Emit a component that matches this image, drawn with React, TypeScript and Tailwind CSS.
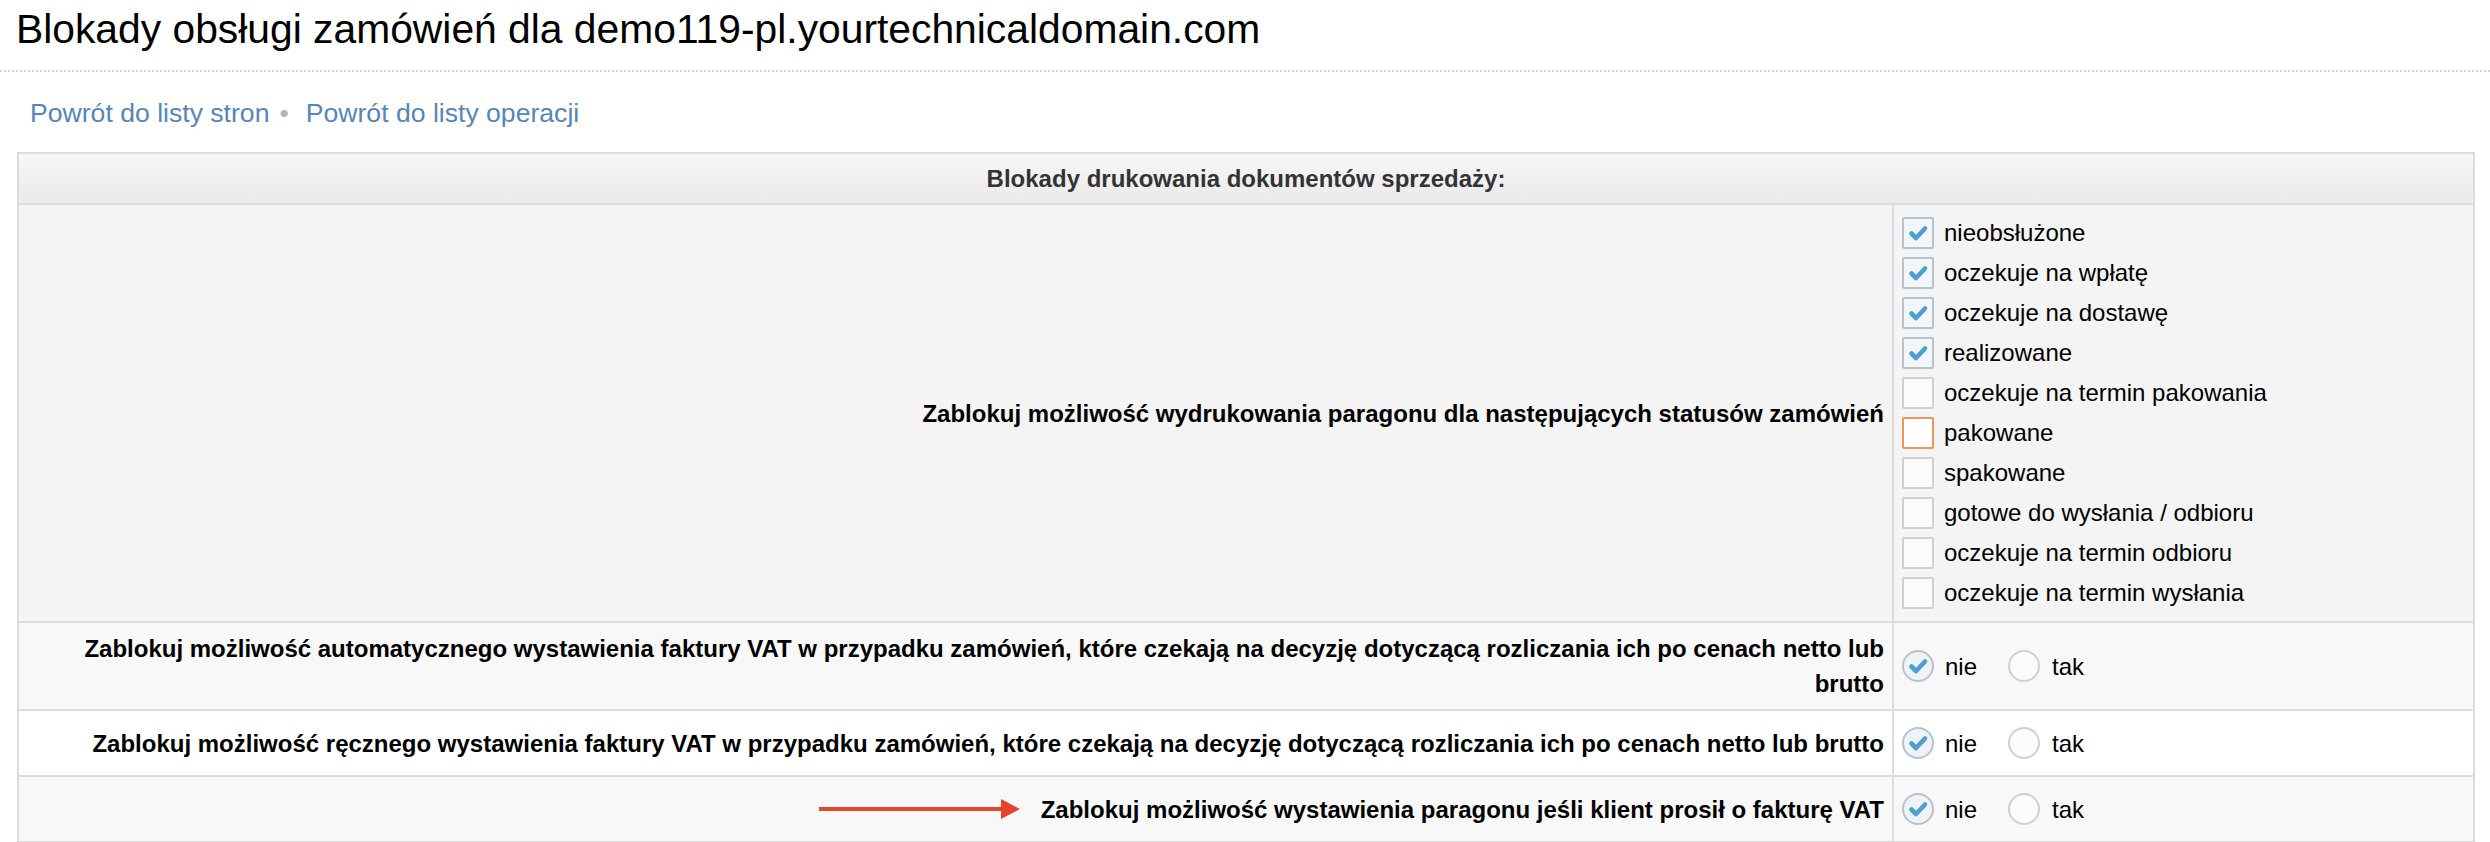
const FONT = "font-['Liberation_Sans',Arial,Helvetica,sans-serif]";

type Status = {
  label: string;
  checked?: boolean;
  focused?: boolean;
};

const STATUSES: Status[] = [
  { label: "nieobsłużone", checked: true },
  { label: "oczekuje na wpłatę", checked: true },
  { label: "oczekuje na dostawę", checked: true },
  { label: "realizowane", checked: true },
  { label: "oczekuje na termin pakowania" },
  { label: "pakowane", focused: true },
  { label: "spakowane" },
  { label: "gotowe do wysłania / odbioru" },
  { label: "oczekuje na termin odbioru" },
  { label: "oczekuje na termin wysłania" },
];

function CheckMark() {
  return (
    <svg viewBox="0 0 28 28" className="h-[28px] w-[28px]">
      <path
        d="M7.5 14.5 L12 19 L21 9.5"
        fill="none"
        stroke="#4d9fd1"
        strokeWidth="4.6"
        strokeLinecap="round"
        strokeLinejoin="round"
      />
    </svg>
  );
}

function Checkbox({ checked, focused }: { checked?: boolean; focused?: boolean }) {
  const tone = checked
    ? "border-[#b7c2ce] bg-[#f3f6f9]"
    : focused
      ? "border-[#f0955a] bg-white"
      : "border-[#d0d0d0] bg-[#fbfbfb]";
  return (
    <span className={`flex h-[32px] w-[32px] shrink-0 items-center justify-center rounded-[2px] border-2 ${tone}`}>
      {checked && <CheckMark />}
    </span>
  );
}

function Radio({ checked }: { checked?: boolean }) {
  const tone = checked ? "border-[#b7c2ce] bg-[#eef3f8]" : "border-[#d0d0d0] bg-[#fcfcfc]";
  return (
    <span className={`flex h-[32px] w-[32px] shrink-0 items-center justify-center rounded-full border-2 ${tone}`}>
      {checked && <CheckMark />}
    </span>
  );
}

function YesNo() {
  return (
    <div className="flex items-center text-[24px] leading-[35px] text-black">
      <Radio checked />
      <span className="ml-[11px]">nie</span>
      <span className="ml-[31px]">
        <Radio />
      </span>
      <span className="ml-[12px]">tak</span>
    </div>
  );
}

function RedArrow() {
  return (
    <svg viewBox="0 0 201 22" className="h-[22px] w-[201px] shrink-0">
      <line x1="0" y1="11" x2="184" y2="11" stroke="#e8432b" strokeWidth="4" />
      <polygon points="182,1 201,11 182,21" fill="#e8432b" />
    </svg>
  );
}

type RowProps = {
  label: React.ReactNode;
  children: React.ReactNode;
  bg: string;
  before?: React.ReactNode;
};

function SettingRow({ label, children, bg, before }: RowProps) {
  return (
    <div className={`grid grid-cols-[1873px_1fr] border-t-2 border-[#dcdcdc] ${bg}`}>
      <div className="flex items-center justify-end gap-[21px] py-[8px] pl-[8px] pr-[8px] text-right text-[24px] font-bold leading-[35px] text-black">
        {before}
        <span>{label}</span>
      </div>
      <div className="flex min-h-[64px] items-center border-l-2 border-[#dcdcdc] pl-[8px]">{children}</div>
    </div>
  );
}

export default function App() {
  return (
    <div className={`min-h-screen bg-white ${FONT}`}>
      {/* page title + dotted rule */}
      <h1 className="border-b-2 border-dotted border-[#d4d4d4] px-[16px] pb-[17px] pt-[5px] text-[40.8px] font-normal leading-[48px] text-black">
        Blokady obsługi zamówień dla demo119-pl.yourtechnicaldomain.com
      </h1>

      {/* breadcrumbs */}
      <div className="mb-[21px] mt-[23px] flex items-center pl-[30px] text-[26.6px] leading-[36px] text-[#5686b8]">
        <a>Powrót do listy stron</a>
        <span className="ml-[10px] mr-[17px] text-[#b3b3bb]">•</span>
        <a>Powrót do listy operacji</a>
      </div>

      {/* settings table */}
      <div className="ml-[17px] mr-[15px] border-2 border-[#dcdcdc]">
        <div className="flex h-[49px] items-center justify-center bg-linear-to-b from-[#f7f7f7] to-[#eaeaea] text-[24px] font-bold text-[#333]">
          Blokady drukowania dokumentów sprzedaży:
        </div>

        <SettingRow
          bg="bg-[#f4f4f4]"
          label="Zablokuj możliwość wydrukowania paragonu dla następujących statusów zamówień"
        >
          <div className="flex flex-col py-[8px]">
            {STATUSES.map((s) => (
              <div key={s.label} className="flex h-[40px] items-center gap-[10px] text-[24px] text-black">
                <Checkbox checked={s.checked} focused={s.focused} />
                <span>{s.label}</span>
              </div>
            ))}
          </div>
        </SettingRow>

        <SettingRow
          bg="bg-[#f8f8f8]"
          label="Zablokuj możliwość automatycznego wystawienia faktury VAT w przypadku zamówień, które czekają na decyzję dotyczącą rozliczania ich po cenach netto lub brutto"
        >
          <YesNo />
        </SettingRow>

        <SettingRow
          bg="bg-white"
          label="Zablokuj możliwość ręcznego wystawienia faktury VAT w przypadku zamówień, które czekają na decyzję dotyczącą rozliczania ich po cenach netto lub brutto"
        >
          <YesNo />
        </SettingRow>

        <SettingRow
          bg="bg-[#f8f8f8]"
          before={<RedArrow />}
          label="Zablokuj możliwość wystawienia paragonu jeśli klient prosił o fakturę VAT"
        >
          <YesNo />
        </SettingRow>
      </div>
    </div>
  );
}
